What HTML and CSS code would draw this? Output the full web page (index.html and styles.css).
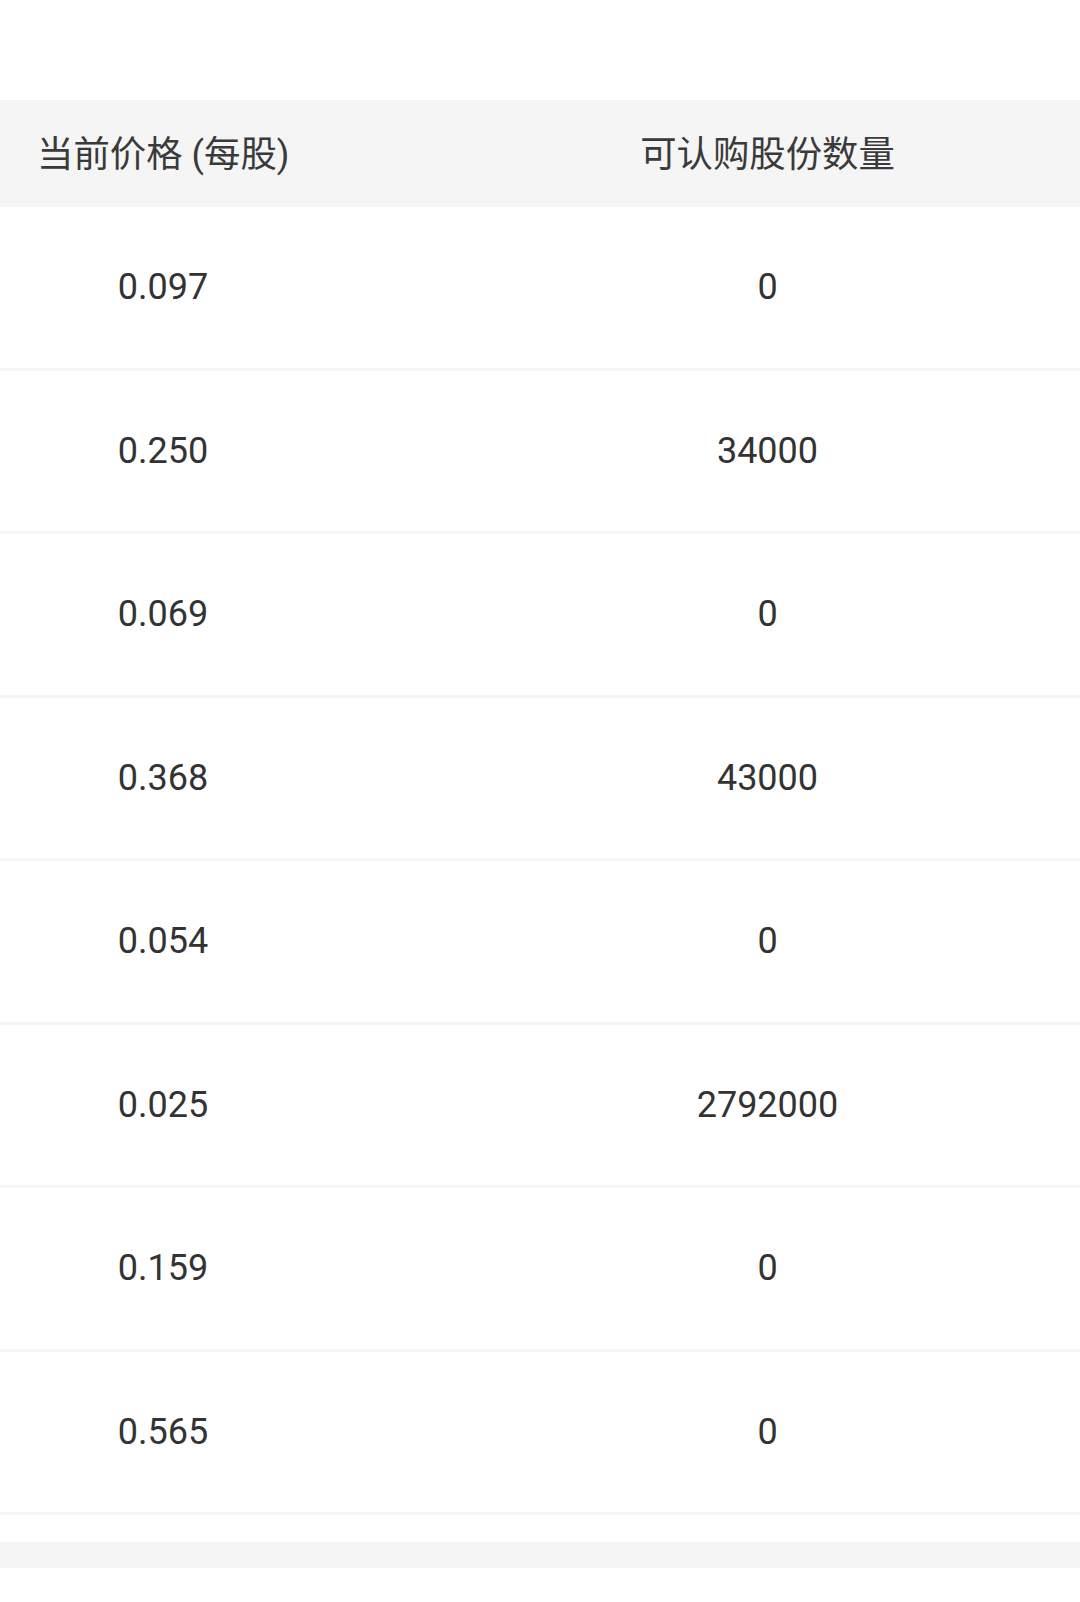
FILE: index.html
```html
<!DOCTYPE html>
<html lang="zh-CN">
<head>
    <meta charset="UTF-8">
    <meta name="viewport" content="width=device-width, initial-scale=1.0">
    <title>认购股份</title>
    <link rel="stylesheet" href="styles.css">
</head>
<body>

    <!-- Price / Quantity Table -->
    <div class="table">
        <div class="table-head">
            <div class="cell-left">当前价格 (每股)</div>
            <div class="cell-right">可认购股份数量</div>
        </div>

        <div class="table-row">
            <div class="cell-price">0.097</div>
            <div class="cell-right">0</div>
        </div>
        <div class="table-row">
            <div class="cell-price">0.250</div>
            <div class="cell-right">34000</div>
        </div>
        <div class="table-row">
            <div class="cell-price">0.069</div>
            <div class="cell-right">0</div>
        </div>
        <div class="table-row">
            <div class="cell-price">0.368</div>
            <div class="cell-right">43000</div>
        </div>
        <div class="table-row">
            <div class="cell-price">0.054</div>
            <div class="cell-right">0</div>
        </div>
        <div class="table-row">
            <div class="cell-price">0.025</div>
            <div class="cell-right">2792000</div>
        </div>
        <div class="table-row">
            <div class="cell-price">0.159</div>
            <div class="cell-right">0</div>
        </div>
        <div class="table-row">
            <div class="cell-price">0.565</div>
            <div class="cell-right">0</div>
        </div>
    </div>

    <div class="footer-bar"></div>

</body>
</html>
```

FILE: styles.css
```css
/* Global Styles */
body {
    font-family: Roboto, "Noto Sans CJK SC", sans-serif;
    margin: 0;
    padding: 0;
    background: #fff;
    color: #333;
}

.table {
    padding-top: 100px;
}

.table-head {
    display: grid;
    grid-template-columns: 326px 1fr;
    align-items: center;
    height: 107px;
    padding-bottom: 5px;
    box-sizing: border-box;
    background: #f5f5f5;
    font-size: 36.4px;
    color: #3a3a3a;
}

.table-row {
    display: grid;
    grid-template-columns: 326px 1fr;
    align-items: center;
    height: 160.5px;
    border-bottom: 3px solid #f5f5f5;
    font-size: 36px;
}

.cell-left {
    padding-left: 37px;
    white-space: nowrap;
}

.cell-price {
    text-align: center;
}

.cell-right {
    text-align: center;
    padding-left: 129px;
}

.footer-bar {
    height: 26px;
    margin-top: 27px;
    background: #f5f5f5;
}
```
